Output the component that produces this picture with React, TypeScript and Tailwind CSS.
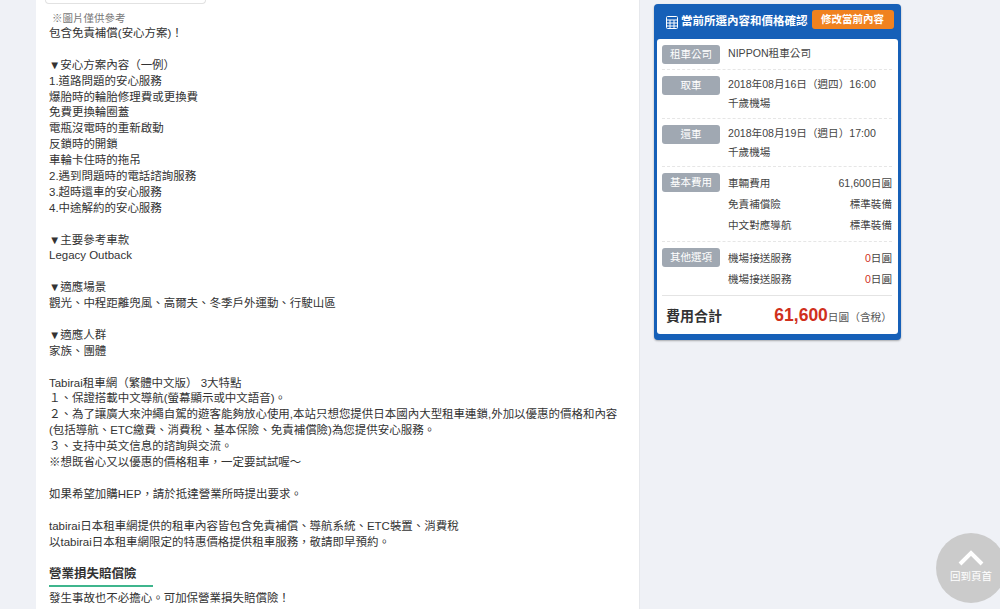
const lines = [
  "包含免責補償(安心方案)！",
  "",
  "▼安心方案內容（一例）",
  "1.道路問題的安心服務",
  "爆胎時的輪胎修理費或更換費",
  "免費更換輪圈蓋",
  "電瓶沒電時的重新啟動",
  "反鎖時的開鎖",
  "車輪卡住時的拖吊",
  "2.遇到問題時的電話諮詢服務",
  "3.超時還車的安心服務",
  "4.中途解約的安心服務",
  "",
  "▼主要參考車款",
  "Legacy Outback",
  "",
  "▼適應場景",
  "觀光、中程距離兜風、高爾夫、冬季戶外運動、行駛山區",
  "",
  "▼適應人群",
  "家族、團體",
  "",
  "Tabirai租車網（繁體中文版） 3大特點",
  "１、保證搭載中文導航(螢幕顯示或中文語音)。",
  "２、為了讓廣大來沖繩自駕的遊客能夠放心使用,本站只想您提供日本國內大型租車連鎖,外加以優惠的價格和內容",
  "(包括導航、ETC繳費、消費稅、基本保險、免責補償險)為您提供安心服務。",
  "３、支持中英文信息的諮詢與交流。",
  "※想既省心又以優惠的價格租車，一定要試試喔～",
  "",
  "如果希望加購HEP，請於抵達營業所時提出要求。",
  "",
  "tabirai日本租車網提供的租車內容皆包含免責補償、導航系統、ETC裝置、消費稅",
  "以tabirai日本租車網限定的特惠價格提供租車服務，敬請即早預約。",
];

function Tag({ label }: { label: string }) {
  return (
    <div className="w-[58px] h-[19px] shrink-0 rounded-[3px] bg-[#a0a8b2] text-white text-[10.5px] leading-[19px] text-center">
      {label}
    </div>
  );
}

function Row({ left, right, red }: { left: string; right: string; red?: boolean }) {
  return (
    <div className="flex justify-between h-[21px] leading-[21px]">
      <span>{left}</span>
      <span>
        {red && <span className="text-[#d0301c]">0</span>}
        {right}
      </span>
    </div>
  );
}

function Section({ label, children, className }: { label: string; children: React.ReactNode; className: string }) {
  return (
    <div className={`flex gap-[8px] pt-[6px] border-b border-dashed border-[#e6e6e6] ${className}`}>
      <Tag label={label} />
      <div className="flex-1 min-w-0">{children}</div>
    </div>
  );
}

export default function App() {
  return (
    <div
      className="h-[609px] overflow-hidden bg-[#eff1f6] flex items-start pl-[36px] text-[#333]"
      style={{ fontFamily: '"Liberation Sans", "Noto Sans CJK TC", sans-serif' }}
    >
      <main className="w-[604px] h-[609px] shrink-0 bg-white pl-[13px] pr-[10px] text-[11.47px] leading-[16px] border-r border-[#e6e8ec]">
        <div className="-ml-[4px] w-[161px] h-[4px] bg-white border border-t-0 border-[#e2e2e2] rounded-b-[4px]" />
        <div className="pt-[7px] pl-[3px] text-[10.5px] leading-[14px] text-[#777]">※圖片僅供參考</div>
        <div>
          {lines.map((line, i) => (
            <div key={i} className="h-[15.9px] whitespace-nowrap">
              {line}
            </div>
          ))}
        </div>
        <h3 className="mt-[15px] w-[104px] h-[23px] border-b-2 border-[#3fb58d] text-[12.5px] leading-[20px] font-bold">
          營業損失賠償險
        </h3>
        <p className="mt-[3px]">發生事故也不必擔心。可加保營業損失賠償險！</p>
      </main>

      <aside className="ml-[14px] mt-[4px] w-[247px] h-[336px] rounded-[4px] bg-[#1660b8] px-[3px] pb-[3px] shadow-[0_1px_2px_rgba(0,0,0,0.3)]">
        <div className="h-[35px] flex items-start pl-[9px]">
          <svg width="12" height="13" viewBox="0 0 12 13" fill="none" stroke="white" strokeWidth="1" className="mt-[12px]">
            <rect x="0.5" y="0.5" width="11" height="12" rx="1" />
            <path d="M0.5 4h11M0.5 7h11M0.5 10h11M4 4v8.5M8 4v8.5" />
          </svg>
          <span className="ml-[3px] mt-[9px] text-white text-[11.5px] leading-[16px] font-bold whitespace-nowrap">當前所選內容和價格確認</span>
          <div className="ml-[4px] mt-[6px] w-[82px] h-[19px] rounded-[3px] bg-[#f0821f] text-white text-[10.5px] font-bold leading-[19px] text-center">
            修改當前內容
          </div>
        </div>
        <div className="bg-white rounded-[3px] h-[295px] pl-[5px] pr-[6px] text-[10.6px] text-[#444]">
          <Section label="租車公司" className="h-[31px]">
            <div className="leading-[17px]">NIPPON租車公司</div>
          </Section>
          <Section label="取車" className="h-[49px]">
            <div className="leading-[17px]">2018年08月16日（週四）16:00</div>
            <div className="leading-[20px]">千歲機場</div>
          </Section>
          <Section label="還車" className="h-[48px]">
            <div className="leading-[17px]">2018年08月19日（週日）17:00</div>
            <div className="leading-[20px]">千歲機場</div>
          </Section>
          <Section label="基本費用" className="h-[75px]">
            <Row left="車輛費用" right="61,600日圓" />
            <Row left="免責補償險" right="標準裝備" />
            <Row left="中文對應導航" right="標準裝備" />
          </Section>
          <Section label="其他選項" className="h-[53px] border-b-0">
            <Row left="機場接送服務" right="日圓" red />
            <Row left="機場接送服務" right="日圓" red />
          </Section>
          <div className="border-t border-[#e4e4e4] flex items-center justify-between h-[39px] pl-[4px]">
            <span className="text-[14px] font-bold text-[#333] mt-[2px]">費用合計</span>
            <span className="flex items-baseline">
              <span className="text-[17.5px] font-bold text-[#d0301c]">61,600</span>
              <span className="text-[10.7px] text-[#555]">日圓（含稅）</span>
            </span>
          </div>
        </div>
      </aside>

      <button className="fixed right-[-6px] bottom-[6px] w-[70px] h-[70px] rounded-full bg-[#cbcbcb] flex flex-col items-center text-white text-[10.5px]">
        <svg width="26" height="18" viewBox="0 0 26 18" fill="none" stroke="white" strokeWidth="4" className="mt-[16px]">
          <path d="M2 15L13 4l11 11" />
        </svg>
        <span className="mt-[2px] leading-[14px]">回到頁首</span>
      </button>
    </div>
  );
}
